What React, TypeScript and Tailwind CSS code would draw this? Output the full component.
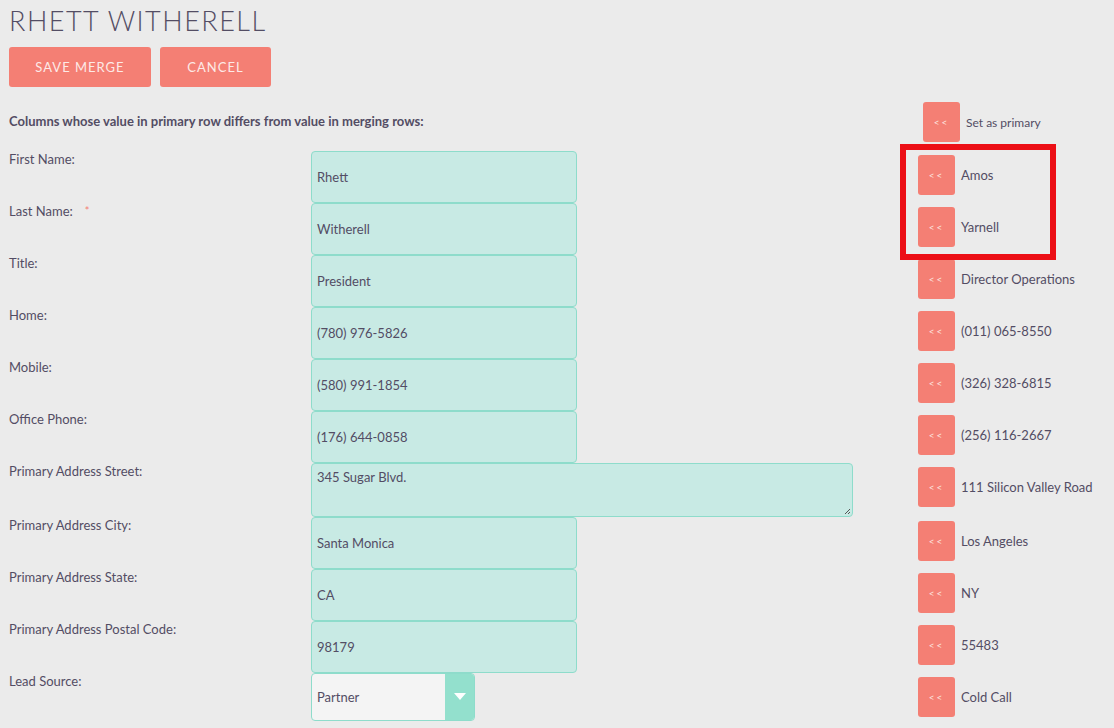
import React from 'react';

type Row = {
  label: string;
  required?: boolean;
  value: string;
  other: string;
  kind?: 'input' | 'textarea' | 'select';
};

const ROWS: Row[] = [
  { label: 'First Name:', value: 'Rhett', other: 'Amos' },
  { label: 'Last Name:', required: true, value: 'Witherell', other: 'Yarnell' },
  { label: 'Title:', value: 'President', other: 'Director Operations' },
  { label: 'Home:', value: '(780) 976-5826', other: '(011) 065-8550' },
  { label: 'Mobile:', value: '(580) 991-1854', other: '(326) 328-6815' },
  { label: 'Office Phone:', value: '(176) 644-0858', other: '(256) 116-2667' },
  { label: 'Primary Address Street:', value: '345 Sugar Blvd.', other: '111 Silicon Valley Road', kind: 'textarea' },
  { label: 'Primary Address City:', value: 'Santa Monica', other: 'Los Angeles' },
  { label: 'Primary Address State:', value: 'CA', other: 'NY' },
  { label: 'Primary Address Postal Code:', value: '98179', other: '55483' },
  { label: 'Lead Source:', value: 'Partner', other: 'Cold Call', kind: 'select' },
  { label: 'Account Name:', value: '', other: '' },
];

const ArrowBtn: React.FC<{ className?: string }> = ({ className = '' }) => (
  <button className={`w-[37px] h-[40px] rounded-[3px] bg-[#f47f74] text-[#fde3df] text-[10px] tracking-[2px] flex items-center justify-center shrink-0 ${className}`}>
    {'<<'}
  </button>
);

const Field: React.FC<{ row: Row }> = ({ row }) => {
  if (row.kind === 'textarea') {
    return (
      <div className="relative w-[542px] h-[54px] rounded-[4px] border border-[#8edccb] bg-[#c8eae4] px-[5px] pt-[4px] text-[13px] text-[#534d64]">
        {row.value}
        <svg className="absolute right-[1px] bottom-[1px]" width="8" height="8" viewBox="0 0 8 8">
          <path d="M7 2L2 7M7 5L5 7" stroke="#555" strokeWidth="1" />
        </svg>
      </div>
    );
  }
  if (row.kind === 'select') {
    return (
      <div className="flex w-[164px] h-[48px] rounded-[4px] border border-[#8edccb] bg-[#f4f4f4] overflow-hidden">
        <div className="flex-1 flex items-center px-[5px] pt-[2px] text-[13px] text-[#534d64]">{row.value}</div>
        <div className="w-[29px] bg-[#93e0cd] flex items-center justify-center">
          <svg width="12" height="8" viewBox="0 0 12 8">
            <path d="M0 0H12L6 7Z" fill="#ffffff" />
          </svg>
        </div>
      </div>
    );
  }
  return (
    <div className="w-[266px] h-[52px] rounded-[4px] border border-[#8edccb] bg-[#c8eae4] px-[5px] pt-[2px] flex items-center text-[13px] text-[#534d64]">
      {row.value}
    </div>
  );
};

export default function App() {
  return (
    <div className="relative bg-[#ebebeb] text-[#534d64] font-['Lato',sans-serif] pl-[9px] overflow-hidden h-[728px]">
      <h1 className="pt-[5px] text-[27px] leading-[32px] font-light tracking-[1.5px] uppercase text-[#534d64]">
        Rhett Witherell
      </h1>

      <div className="flex gap-[9px] mt-[10px]">
        <button className="w-[142px] h-[40px] rounded-[3px] bg-[#f47f74] text-[#fdeae7] text-[13px] tracking-[1px] uppercase pt-[2px]">
          Save Merge
        </button>
        <button className="w-[111px] h-[40px] rounded-[3px] bg-[#f47f74] text-[#fdeae7] text-[13px] tracking-[1px] uppercase pt-[2px]">
          Cancel
        </button>
      </div>

      <div className="flex items-center mt-[15px] mb-[9px]">
        <div className="w-[914px] text-[13px] font-bold">
          Columns whose value in primary row differs from value in merging rows:
        </div>
        <ArrowBtn />
        <span className="ml-[6px] text-[12px] pt-[2px]">Set as primary</span>
      </div>

      {ROWS.map((row) => (
        <div key={row.label} className={`flex ${row.kind === 'textarea' ? 'h-[54px]' : 'h-[52px]'}`}>
          <div className="w-[302px] text-[13px] leading-[16px]">
            {row.label}
            {row.required && <span className="ml-[12px] text-[#f47f74] text-[11px] align-top">*</span>}
          </div>
          <div className="w-[607px]">{row.value || row.kind ? <Field row={row} /> : null}</div>
          <div className="flex items-center self-start mt-[4px] h-[40px]">
            <ArrowBtn />
            {row.other && <span className="ml-[6px] text-[13px] pt-[2px]">{row.other}</span>}
          </div>
        </div>
      ))}

      {/* highlight annotation */}
      <div className="absolute left-[900px] top-[144px] w-[156px] h-[116px] border-[6px] border-[#ec0f16] pointer-events-none" />
    </div>
  );
}
